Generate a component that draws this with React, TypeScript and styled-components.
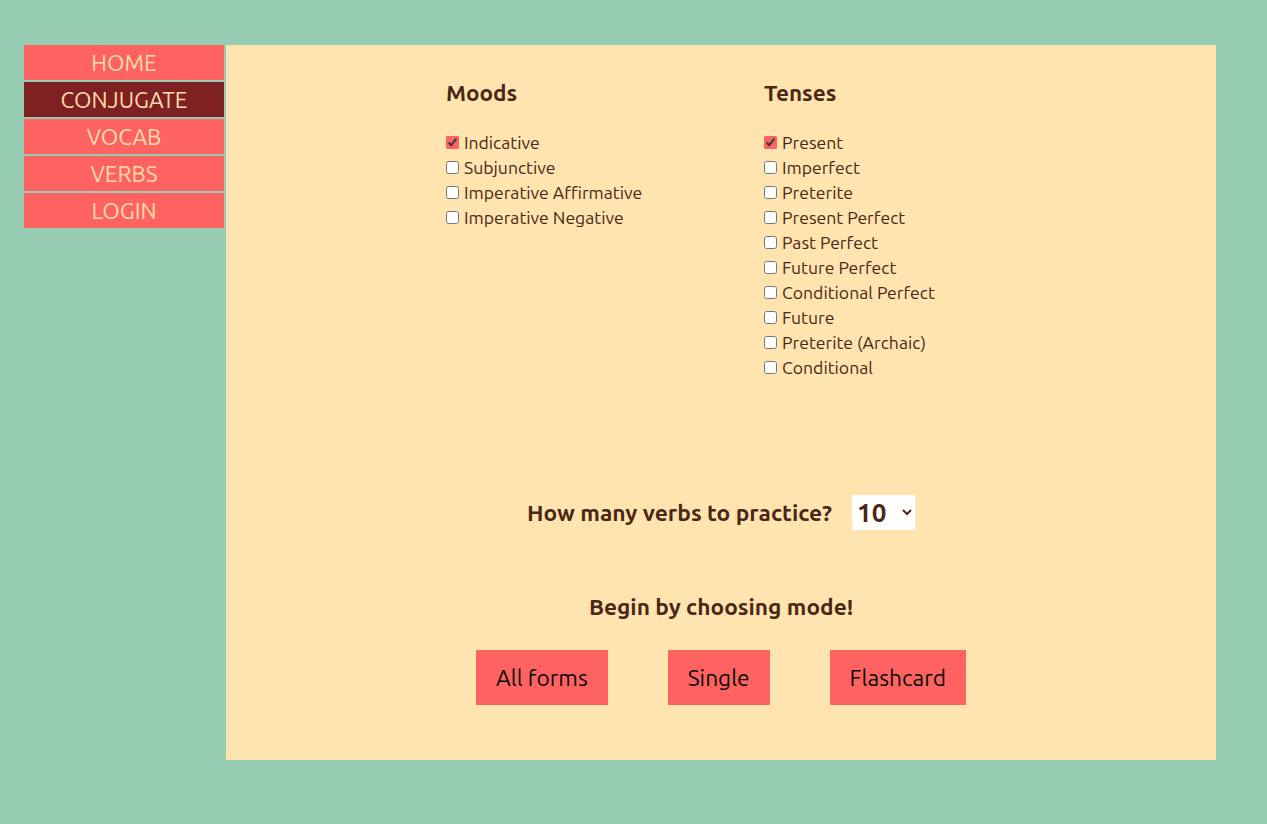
import styled, { createGlobalStyle } from 'styled-components'

const GlobalStyle = createGlobalStyle`
    body {
        margin: 0;
        background: #96cdb2;
        font-family: "Ubuntu", "Open Sans", "Noto Sans", sans-serif;
    }
`

const Page = styled.div`
    display: flex;
    align-items: flex-start;
    gap: 2px;
    padding: 45px 0 0 24px;
    min-height: 824px;
    box-sizing: border-box;
`

const Nav = styled.nav`
    display: flex;
    flex-direction: column;
    gap: 2px;
    width: 200px;
`

const NavItem = styled.a<{ $active?: boolean }>`
    display: flex;
    align-items: center;
    justify-content: center;
    height: 35px;
    background: ${p => (p.$active ? '#7f2123' : '#ff6361')};
    color: #ffdcaa;
    font-size: 22.5px;
    cursor: pointer;
`

const Main = styled.main`
    width: 990px;
    height: 715px;
    background: #ffe4b0;
    color: #4a2716;
    display: flex;
    flex-direction: column;
`

const Options = styled.div`
    display: flex;
    padding: 33px 0 0 220px;
    height: 420px;
    box-sizing: border-box;
`

const Column = styled.div`
    width: 318px;
`

const Heading = styled.h3`
    margin: 0 0 22px;
    font-size: 22.5px;
    font-weight: 700;
    line-height: 30px;
`

const List = styled.div`
    display: flex;
    flex-direction: column;
`

const Row = styled.label`
    display: flex;
    align-items: center;
    height: 25px;
    font-size: 17.6px;

    input {
        margin: 0 5px 0 0;
        width: 13px;
        height: 13px;
        accent-color: #ff6361;
    }
`

const CountRow = styled.div`
    display: flex;
    align-items: center;
    justify-content: center;
    gap: 20px;
    height: 35px;
    margin-top: 30px;
`

const Label = styled.span`
    font-size: 22.8px;
    font-weight: 700;
`

const Select = styled.select`
    height: 35px;
    width: 63px;
    border: none;
    background: #fff;
    color: #4a2716;
    font-family: inherit;
    font-size: 26px;
    font-weight: 700;
    padding: 0 0 0 1px;
`

const Prompt = styled.p`
    margin: 62px 0 0;
    text-align: center;
    font-size: 22.7px;
    font-weight: 700;
    line-height: 30px;
`

const Buttons = styled.div`
    display: flex;
    justify-content: center;
    gap: 60px;
    margin-top: 28px;
`

const ModeButton = styled.button`
    height: 55px;
    padding: 0 20px;
    border: none;
    background: #ff6361;
    color: #0a0a0a;
    font-family: inherit;
    font-size: 22.7px;
    cursor: pointer;
`

const moods = ['Indicative', 'Subjunctive', 'Imperative Affirmative', 'Imperative Negative']
const tenses = [
    'Present',
    'Imperfect',
    'Preterite',
    'Present Perfect',
    'Past Perfect',
    'Future Perfect',
    'Conditional Perfect',
    'Future',
    'Preterite (Archaic)',
    'Conditional',
]

const App = () => {
    return (
        <Page>
            <GlobalStyle />
            <Nav>
                <NavItem>HOME</NavItem>
                <NavItem $active>CONJUGATE</NavItem>
                <NavItem>VOCAB</NavItem>
                <NavItem>VERBS</NavItem>
                <NavItem>LOGIN</NavItem>
            </Nav>
            <Main>
                <Options>
                    <Column>
                        <Heading>Moods</Heading>
                        <List>
                            {moods.map((m, i) => (
                                <Row key={m}>
                                    <input type="checkbox" defaultChecked={i === 0} />
                                    {m}
                                </Row>
                            ))}
                        </List>
                    </Column>
                    <Column>
                        <Heading>Tenses</Heading>
                        <List>
                            {tenses.map((t, i) => (
                                <Row key={t}>
                                    <input type="checkbox" defaultChecked={i === 0} />
                                    {t}
                                </Row>
                            ))}
                        </List>
                    </Column>
                </Options>
                <CountRow>
                    <Label>How many verbs to practice?</Label>
                    <Select defaultValue="10">
                        <option>5</option>
                        <option>10</option>
                        <option>15</option>
                        <option>20</option>
                    </Select>
                </CountRow>
                <Prompt>Begin by choosing mode!</Prompt>
                <Buttons>
                    <ModeButton>All forms</ModeButton>
                    <ModeButton>Single</ModeButton>
                    <ModeButton>Flashcard</ModeButton>
                </Buttons>
            </Main>
        </Page>
    )
}

export default App
